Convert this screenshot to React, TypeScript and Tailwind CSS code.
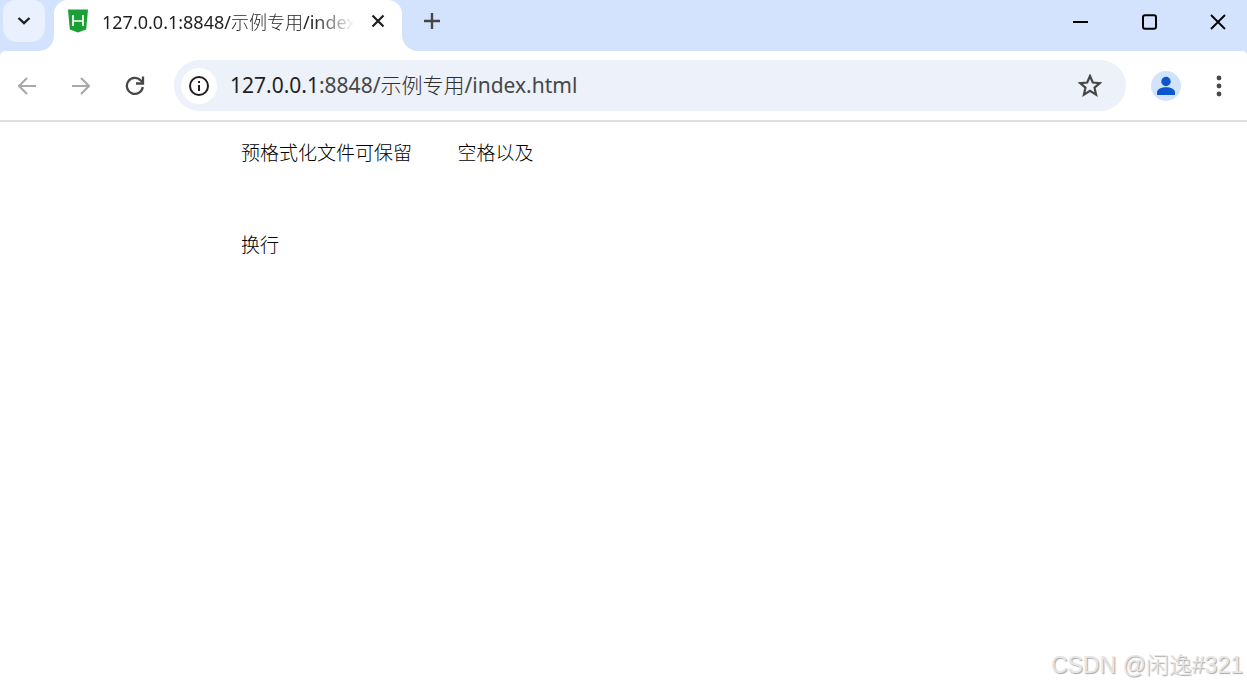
import type { ReactNode } from "react";

const PAGE_TEXT = "预格式化文件可保留    空格以及\n\n\n\n换行";

function IconButton({ label, className, children }: { label: string; className: string; children: ReactNode }) {
  return (
    <button type="button" aria-label={label} className={`flex shrink-0 items-center justify-center ${className}`}>
      {children}
    </button>
  );
}

function TabStrip() {
  return (
    <header className="flex h-[51px] bg-[#d3e2fd]">
      <div className="flex w-[54px] shrink-0 bg-white">
        <div className="grow rounded-br-[15px] bg-[#d3e2fd] pl-[3px]">
          <IconButton label="Search tabs" className="h-[42px] w-[42px] rounded-b-[14px] rounded-t-[12px] bg-[#e9f0fe]">
            <svg width="14" height="10" viewBox="0 0 14 10" fill="none" stroke="#1f1f1f" strokeWidth="2.3">
              <path d="M1.5 2l5.5 5.2L12.5 2" />
            </svg>
          </IconButton>
        </div>
      </div>
      <div className="flex w-[348px] shrink-0 items-start rounded-t-[14px] bg-white pl-[13px]">
        <svg className="mt-[9px] shrink-0" width="22" height="24" viewBox="0 0 22 24">
          <path d="M1 .5h20l-1.8 20L11 23.5 2.8 20.5z" fill="#1aa035" />
          <path d="M6 6v11M16 6v11M6 12h10" fill="none" stroke="#fff" strokeWidth="1.7" />
        </svg>
        <div className="ml-[13px] h-[42px] w-[252px] overflow-hidden whitespace-nowrap text-[18px] leading-[44px] text-[#1f1f1f] [mask-image:linear-gradient(to_right,black_84%,transparent_100%)]">
          127.0.0.1:8848/<span className="font-light">示例专用</span>/index.html
        </div>
        <IconButton label="Close tab" className="ml-[12px] h-[42px] w-[24px]">
          <svg width="14" height="14" viewBox="0 0 14 14" stroke="#1f1f1f" strokeWidth="2.2">
            <path d="M1.5 1.5l11 11M12.5 1.5l-11 11" />
          </svg>
        </IconButton>
      </div>
      <div className="flex grow bg-white">
        <div className="flex grow justify-between rounded-bl-[16px] bg-[#d3e2fd]">
          <IconButton label="New tab" className="ml-[14px] h-[42px] w-[32px]">
            <svg width="16" height="16" viewBox="0 0 16 16" stroke="#474747" strokeWidth="2.4">
              <path d="M0 8h16M8 0v16" />
            </svg>
          </IconButton>
          <div className="flex h-[44px]">
            <IconButton label="Minimize" className="w-[69px]">
              <svg width="16" height="16" viewBox="0 0 16 16">
                <path d="M0 7h15v2H0z" />
              </svg>
            </IconButton>
            <IconButton label="Maximize" className="w-[69px]">
              <svg width="16" height="16" viewBox="0 0 16 16" fill="none" stroke="#000" strokeWidth="2">
                <rect x="1" y="1.2" width="13" height="13.5" rx="2" />
              </svg>
            </IconButton>
            <IconButton label="Close" className="ml-[5px] w-[58px]">
              <svg width="16" height="16" viewBox="0 0 16 16" stroke="#000" strokeWidth="1.8">
                <path d="M1 1l14 14M15 1L1 15" />
              </svg>
            </IconButton>
          </div>
        </div>
      </div>
    </header>
  );
}

function Toolbar() {
  return (
    <div className="bg-[#d3e2fd]">
      <div className="flex h-[71px] items-center rounded-t-[5px] border-b-2 border-[#dfdfdf] bg-white">
        <nav className="flex" aria-label="History">
          <IconButton label="Back" className="h-[42px] w-[54px]">
            <svg width="18" height="18" viewBox="0 0 18 18" fill="none" stroke="#a9a9a9" strokeWidth="2.2">
              <path d="M18 9H1.5M9 1L1 9l8 8" />
            </svg>
          </IconButton>
          <IconButton label="Forward" className="h-[42px] w-[54px]">
            <svg width="18" height="18" viewBox="0 0 18 18" fill="none" stroke="#a9a9a9" strokeWidth="2.2">
              <path d="M0 9h16.5M9 1l8 8-8 8" />
            </svg>
          </IconButton>
          <IconButton label="Reload" className="h-[42px] w-[54px]">
            <svg width="20" height="20" viewBox="0 0 20 20" fill="none" stroke="#474747" strokeWidth="2.3">
              <path d="M17.8 11A8 8 0 1 1 15.8 4.500L18 6.700" />
              <path d="M18 .5v7h-7" />
            </svg>
          </IconButton>
        </nav>
        <div className="ml-[12px] flex h-[51px] min-w-0 grow items-center rounded-full bg-[#ecf1fa] pl-[7px] pr-[20px]">
          <IconButton label="View site information" className="h-[36px] w-[36px] rounded-full bg-white">
            <svg width="20" height="20" viewBox="0 0 20 20" fill="none" stroke="#1f1f1f" strokeWidth="2">
              <circle cx="10" cy="10" r="9" />
              <path d="M10 9v6M10 5v2" />
            </svg>
          </IconButton>
          <a href="#page" className="ml-[13px] min-w-0 grow truncate pb-[2px] text-[21px] leading-[30px] text-[#474747]">
            <span className="text-[#1f1f1f]">127.0.0.1</span>:8848/<span className="font-light text-[#2f2f2f]">示例专用</span>/index.html
          </a>
          <IconButton label="Bookmark this tab" className="h-[32px] w-[32px]">
            <svg width="24" height="24" viewBox="0 0 24 24" fill="none" stroke="#474747" strokeWidth="2.2">
              <path d="M12 2l2.800 6.500 7 .6-5.300 4.600 1.600 6.900-6.100-3.700-6.100 3.700 1.600-6.900L2.200 9.100l7-.6z" />
            </svg>
          </IconButton>
        </div>
        <IconButton label="Profile" className="ml-[25px] h-[30px] w-[30px] rounded-full bg-[#d3e3fd]">
          <svg width="20" height="20" viewBox="0 0 20 20" fill="#0b57d0">
            <circle cx="10" cy="5.5" r="4.7" />
            <path d="M1 19v-2.500C1 13 5.500 11.300 10 11.300s9 1.700 9 5.200V19z" />
          </svg>
        </IconButton>
        <IconButton label="Menu" className="ml-[22px] mr-[12px] h-[42px] w-[32px]">
          <svg width="6" height="22" viewBox="0 0 6 22" fill="#474747">
            <circle cx="3" cy="3" r="2.4" />
            <circle cx="3" cy="11" r="2.4" />
            <circle cx="3" cy="19" r="2.4" />
          </svg>
        </IconButton>
      </div>
    </div>
  );
}

export default function App() {
  return (
    <div className="flex min-h-screen flex-col bg-white font-['Noto_Sans','Noto_Sans_CJK_SC',sans-serif]">
      <TabStrip />
      <Toolbar />
      <main id="page" className="grow pl-[241px] pt-[22px]">
        <pre className="text-[19px] font-light leading-[23px] text-black font-['Liberation_Mono','Noto_Sans_CJK_SC',monospace]">
          {PAGE_TEXT}
        </pre>
      </main>
      <footer className="flex justify-end pb-[4px] pr-[4px] text-[23px] font-light leading-[30px] text-[#e6e6e6] font-['Liberation_Sans','Noto_Sans_CJK_SC',sans-serif] [text-shadow:1px_1px_1px_#a8a8a8]">
        CSDN @闲逸#321
      </footer>
    </div>
  );
}
